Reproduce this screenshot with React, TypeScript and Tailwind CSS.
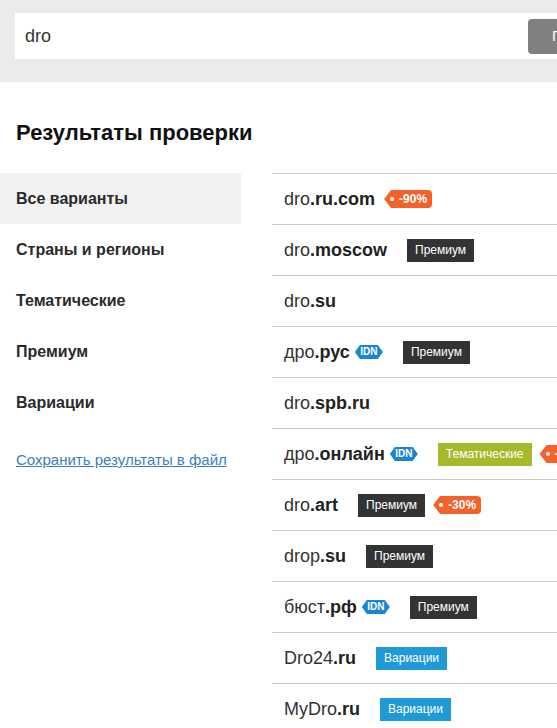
import React from 'react';

type Tag = 'idn' | 'premium' | 'theme' | 'variation' | { sale: string };

interface Row {
  name: string;
  zone: string;
  tags: Tag[];
}

const rows: Row[] = [
  { name: 'dro', zone: '.ru.com', tags: [{ sale: '-90%' }] },
  { name: 'dro', zone: '.moscow', tags: ['premium'] },
  { name: 'dro', zone: '.su', tags: [] },
  { name: 'дро', zone: '.рус', tags: ['idn', 'premium'] },
  { name: 'dro', zone: '.spb.ru', tags: [] },
  { name: 'дро', zone: '.онлайн', tags: ['idn', 'theme', { sale: '-50%' }] },
  { name: 'dro', zone: '.art', tags: ['premium', { sale: '-30%' }] },
  { name: 'drop', zone: '.su', tags: ['premium'] },
  { name: 'бюст', zone: '.рф', tags: ['idn', 'premium'] },
  { name: 'Dro24', zone: '.ru', tags: ['variation'] },
  { name: 'MyDro', zone: '.ru', tags: ['variation'] },
];

const menu = ['Все варианты', 'Страны и регионы', 'Тематические', 'Премиум', 'Вариации'];

const Badge: React.FC<{ tag: Tag; first: boolean }> = ({ tag, first }) => {
  if (tag === 'idn') {
    return (
      <span className="ml-[5px] inline-flex h-[14px] w-[28px] items-center justify-center bg-[#1a86d0] text-[10px] font-bold leading-none text-white [clip-path:polygon(18%_0,82%_0,100%_50%,82%_100%,18%_100%,0_50%)]">
        IDN
      </span>
    );
  }
  if (typeof tag === 'object') {
    return (
      <span
        className={`${first ? 'ml-[9px]' : 'ml-[8px]'} inline-flex h-[18px] items-center rounded-r-[4px] bg-[#f4622a] pl-[5px] pr-[5px] text-[12px] font-bold leading-none text-white [clip-path:polygon(7px_0,100%_0,100%_100%,7px_100%,0_50%)]`}
      >
        <span className="mr-[5px] ml-[1px] h-[4px] w-[4px] rounded-full bg-white" />
        {tag.sale}
      </span>
    );
  }
  const styles: Record<string, string> = {
    premium: 'bg-[#333333]',
    theme: 'bg-[#a6b92b]',
    variation: 'bg-[#1f9ad7]',
  };
  const labels: Record<string, string> = {
    premium: 'Премиум',
    theme: 'Тематические',
    variation: 'Вариации',
  };
  return (
    <span
      className={`ml-[20px] inline-flex h-[23px] items-center px-[8px] text-[12px] leading-none text-white ${styles[tag]}`}
    >
      {labels[tag]}
    </span>
  );
};

export default function App() {
  return (
    <div
      className="w-[557px] overflow-hidden bg-white text-[#333]"
      style={{ fontFamily: '"Liberation Sans", Arial, sans-serif' }}
    >
      <div className="h-[82px] bg-[#ebebeb] pl-[15px] pt-[13px]">
        <div className="flex h-[46px] w-[700px] items-center bg-white pl-[10px]">
          <span className="w-[503px] text-[18px] text-[#333]">dro</span>
          <button className="h-[35px] rounded-[4px] bg-[#808080] px-[24px] text-[15px] text-white">
            Проверить
          </button>
        </div>
      </div>

      <h1 className="pl-4 pt-[39px] pb-[28px] text-[22px] font-bold leading-[24px] text-[#111]">
        Результаты проверки
      </h1>

      <div className="flex">
        <div className="w-[241px] shrink-0">
          {menu.map((item, i) => (
            <div
              key={item}
              className={`flex h-[51px] items-center pl-4 text-[16px] font-bold text-[#2b2b2b] ${
                i === 0 ? 'bg-[#f2f2f2]' : ''
              }`}
            >
              {item}
            </div>
          ))}
          <a href="#" className="mt-[23px] block pl-4 text-[15px] leading-[18px] text-[#3a7fc0] underline">
            Сохранить результаты в файл
          </a>
        </div>

        <div className="ml-[31px] w-[400px] shrink-0 border-t border-[#cccccc]">
          {rows.map((row, i) => (
            <div
              key={i}
              className="flex h-[51px] items-center whitespace-nowrap border-b border-[#cccccc] pl-3"
            >
              <span className="text-[18px] text-[#333]">
                {row.name}
                <b className="text-[#222]">{row.zone}</b>
              </span>
              {row.tags.map((t, j) => (
                <Badge key={j} tag={t} first={j === 0} />
              ))}
            </div>
          ))}
        </div>
      </div>
    </div>
  );
}
